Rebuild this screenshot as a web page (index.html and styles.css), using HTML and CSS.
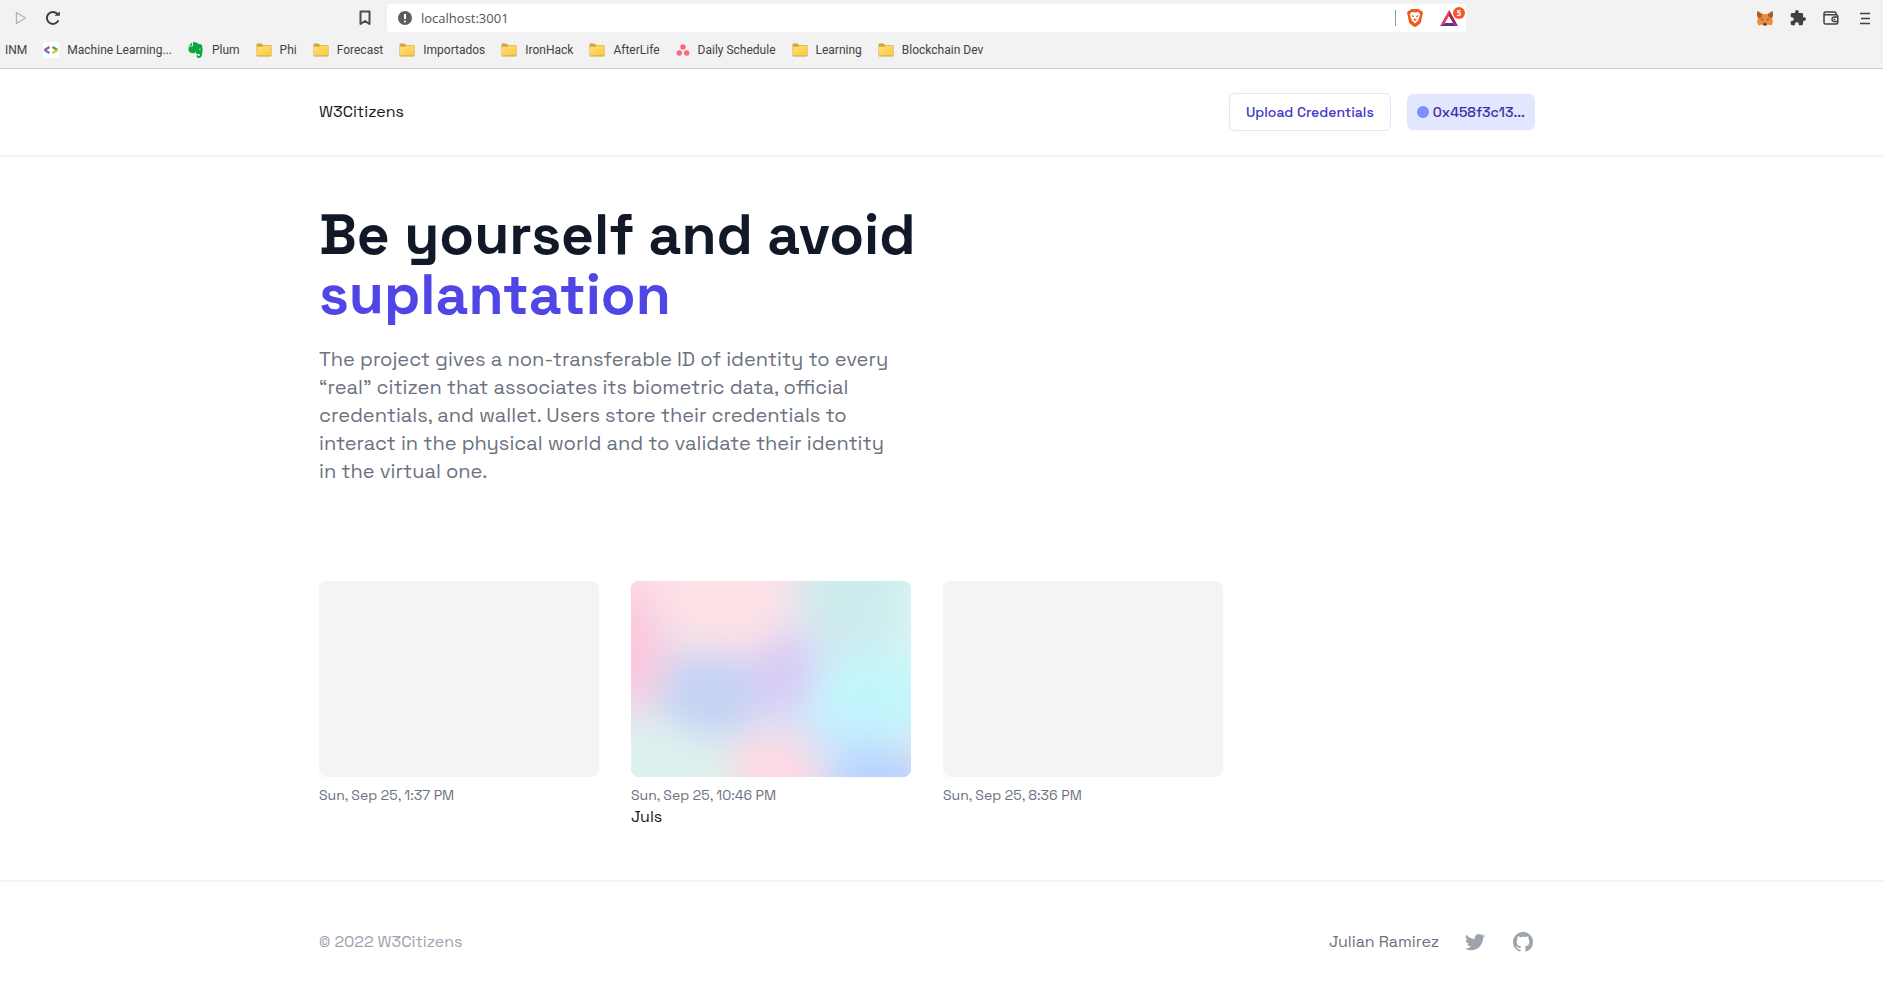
FILE: index.html
```html
<!DOCTYPE html>
<html lang="en">
<head>
<meta charset="utf-8">
<meta name="viewport" content="width=device-width, initial-scale=1">
<title>W3Citizens</title>
<link rel="stylesheet" href="styles.css">
</head>
<body>
<svg class="sprite" aria-hidden="true">
  <defs>
    <linearGradient id="folder-fill" x1="0" y1="0" x2="1" y2="1">
      <stop offset="0" stop-color="#ffe07a"/><stop offset="1" stop-color="#fbc93c"/>
    </linearGradient>
    <linearGradient id="bat-left" x1="0" y1="0" x2="0" y2="1">
      <stop offset="0" stop-color="#ff4724"/><stop offset="1" stop-color="#c6407a"/>
    </linearGradient>
    <filter id="soften" x="-50%" y="-50%" width="200%" height="200%">
      <feGaussianBlur stdDeviation="18"/>
    </filter>
  </defs>
  <symbol id="folder" viewBox="0 0 16 14">
    <path d="M0.5 1.5Q0.5 0.5 1.5 0.5H5.5L7 2H14.5Q15.5 2 15.5 3V12.5Q15.5 13.5 14.5 13.5H1.5Q0.5 13.5 0.5 12.5Z" fill="#cfa540"/>
    <path d="M1 3.800H6L7.500 2.600H15V12.400H1Z" fill="url(#folder-fill)"/>
  </symbol>
</svg>

<div class="browser">
  <div class="toolbar">
    <div class="nav">
      <button class="tool" aria-label="Forward"><svg width="12" height="14" viewBox="0 0 12 14"><path d="M1.5 1.5L10.5 7L1.5 12.5Z" fill="none" stroke="#b4b4b6" stroke-width="1.4" stroke-linejoin="round"/></svg></button>
      <button class="tool" aria-label="Reload"><svg width="16" height="16" viewBox="0 0 16 16"><path d="M13.4 10.3A6 6 0 1 1 12.3 3.8" fill="none" stroke="#3b3d40" stroke-width="2"/><path d="M9.4 5.8H14.8V1.4Z" fill="#3b3d40"/></svg></button>
    </div>
    <button class="tool" aria-label="Bookmark this page"><svg width="12" height="16" viewBox="0 0 12 16"><path d="M1.5 1.5H10.5V14L6 11L1.5 14Z" fill="none" stroke="#4a4c50" stroke-width="2" stroke-linejoin="round"/></svg></button>
    <div class="address">
      <svg width="14" height="14" viewBox="0 0 14 14"><circle cx="7" cy="7" r="7" fill="#5a5d61"/><path d="M7 3V8" stroke="#fff" stroke-width="2"/><circle cx="7" cy="10.5" r="1.1" fill="#fff"/></svg>
      <input class="url" type="text" aria-label="Address" value="localhost:3001">
      <span class="divider"></span>
      <button class="tool" aria-label="Brave Shields"><svg width="16" height="18" viewBox="0 0 16 18"><path d="M4.2 0H11.8L13.2 1.6L15.2 2L16 4.6L15.4 6L14 13C13.4 14.8 9.6 17.4 8 18C6.400 17.4 2.600 14.800 2 13L.6 6L0 4.600L.8 2L2.800 1.600Z" fill="#f05a1a"/><path d="M4.600 3L8 3.500L11.400 3L13.200 5.600L12 9L11.200 11.500L8 14.500L4.800 11.500L4 9L2.800 5.600Z" fill="#fff"/><path d="M4.400 6L7 6.900L6.900 8.200L5 7.400ZM11.600 6L9 6.900L9.100 8.200L11 7.400ZM6.200 10.500L8 9.400L9.800 10.500L8 12Z" fill="#f05a1a"/></svg></button>
      <button class="tool rewards" aria-label="Brave Rewards"><svg width="18" height="16" viewBox="0 0 18 16"><path d="M9 0L0 16L5 13L9 6Z" fill="url(#bat-left)"/><path d="M9 0L18 16L13 13L9 6Z" fill="#9e1f63"/><path d="M0 16H18L13 13H5Z" fill="#662d91"/></svg><span class="badge">5</span></button>
    </div>
    <div class="extensions">
      <button class="tool" aria-label="MetaMask"><svg width="16" height="15" viewBox="0 0 16 15"><path d="M.5 0L6 3H10L15.500 0L16 4L15 7L16 11L14.500 14.500L11 13.500L9.500 15H6.500L5 13.500L1.500 14.500L0 11L1 7L0 4Z" fill="#f08a3c"/><path d="M.5 0L5.200 3.500L4 6.500L1 7L0 4ZM15.500 0L10.800 3.500L12 6.500L15 7L16 4Z" fill="#a85a32"/><path d="M4 7.500L6.600 9L4.700 9.600ZM12 7.500L9.400 9L11.300 9.600Z" fill="#4a4a4a"/><path d="M6.500 12.200H9.500L9.800 14H6.200Z" fill="#33302f"/><path d="M5 13.500L6.200 12.500V14.600ZM11 13.500L9.800 12.500V14.600Z" fill="#d8c8bc"/></svg></button>
      <button class="tool" aria-label="Extensions"><svg width="16" height="16" viewBox="1 1 22 22"><path d="M20.500 11H19V7a2 2 0 0 0-2-2h-4V3.500a2.500 2.500 0 0 0-5 0V5H4a2 2 0 0 0-2 2v3.800h1.500a2.700 2.700 0 0 1 0 5.400H2V20a2 2 0 0 0 2 2h3.800v-1.500a2.700 2.700 0 0 1 5.400 0V22H17a2 2 0 0 0 2-2v-4h1.500a2.500 2.500 0 0 0 0-5z" fill="#3f4144"/></svg></button>
      <button class="tool" aria-label="Wallet"><svg width="16" height="14" viewBox="0 0 16 14"><path d="M13 3.500V2.500Q13 1 11.500 1H2.500Q1 1 1 2.500V11.500Q1 13 2.500 13H13Q14.800 13 14.800 11.500V5.500Q14.800 3.700 13 3.700H1.500M14.800 6H10.800A2.300 2.300 0 0 0 10.800 10.500H14.800" fill="none" stroke="#3f4144" stroke-width="1.500"/><circle cx="11.500" cy="8.300" r=".9" fill="#3f4144"/></svg></button>
      <button class="tool menu" aria-label="Menu"><svg width="10" height="13" viewBox="0 0 10 13"><path d="M0 1.500H10M1 6.500H10M0 11.500H10" stroke="#3f4144" stroke-width="1.600"/></svg></button>
    </div>
  </div>
  <nav class="bookmarks" aria-label="Bookmarks">
    <a class="bookmark" href="#">INM</a>
    <a class="bookmark" href="#"><svg width="16" height="16" viewBox="0 0 16 16"><rect width="16" height="16" rx="2" fill="#fff"/><path d="M6.500 5L1.500 8" stroke="#ea4335" stroke-width="2.200"/><path d="M1.500 8L6.500 11" stroke="#4285f4" stroke-width="2.200"/><path d="M9.500 5L14.500 8" stroke="#34a853" stroke-width="2.200"/><path d="M14.500 8L9.500 11" stroke="#fbbc05" stroke-width="2.200"/></svg>Machine Learning...</a>
    <a class="bookmark" href="#"><svg width="16" height="16" viewBox="0 0 16 16"><path d="M5 0V3.500Q5 4.500 4 4.500H.8Q0 7 1 9.500Q2 11.500 6.500 11.200Q7 9.500 7.500 9.500Q7.500 11.500 9 12H11Q12.200 12.300 12 13.300Q11.500 14.200 10 13.800V12.800Q8.500 13 8.600 14.500Q9 16 11.500 16Q13.500 15.800 14 13Q15.300 7 14 3.200Q13.500 2 10 1.800Q9 0 5 0ZM4 .4L.9 3.700H3.500Q4 3.700 4 3Z" fill="#0aa83a"/><path d="M10.600 7.200Q12.400 6.200 12.700 8Z" fill="#fff"/></svg>Plum</a>
    <a class="bookmark" href="#"><svg width="16" height="14"><use href="#folder"/></svg>Phi</a>
    <a class="bookmark" href="#"><svg width="16" height="14"><use href="#folder"/></svg>Forecast</a>
    <a class="bookmark" href="#"><svg width="16" height="14"><use href="#folder"/></svg>Importados</a>
    <a class="bookmark" href="#"><svg width="16" height="14"><use href="#folder"/></svg>IronHack</a>
    <a class="bookmark" href="#"><svg width="16" height="14"><use href="#folder"/></svg>AfterLife</a>
    <a class="bookmark" href="#"><svg width="14" height="14" viewBox="0 0 14 14"><g fill="#f8697a"><circle cx="7" cy="4" r="2.700"/><circle cx="3.300" cy="10" r="2.700"/><circle cx="10.700" cy="10" r="2.700"/></g></svg>Daily Schedule</a>
    <a class="bookmark" href="#"><svg width="16" height="14"><use href="#folder"/></svg>Learning</a>
    <a class="bookmark" href="#"><svg width="16" height="14"><use href="#folder"/></svg>Blockchain Dev</a>
  </nav>
</div>

<div class="page">
  <header class="site-header">
    <div class="container header-row">
      <a class="brand" href="#">W3Citizens</a>
      <div class="actions">
        <button class="upload">Upload Credentials</button>
        <button class="account"><span class="dot"></span>0x458f3c13...</button>
      </div>
    </div>
  </header>

  <main class="container main">
    <h1 class="title">Be yourself and avoid <span class="accent">suplantation</span></h1>
    <p class="lead">The project gives a non-transferable ID of identity to every “real” citizen that associates its biometric data, official credentials, and wallet. Users store their credentials to interact in the physical world and to validate their identity in the virtual one.</p>
    <ul class="cards">
      <li class="card"><div class="thumb"></div><p class="date">Sun, Sep 25, 1:37 PM</p></li>
      <li class="card">
        <div class="thumb">
          <svg class="mesh" viewBox="0 0 280 196" preserveAspectRatio="none" aria-hidden="true">
            <rect width="280" height="196" fill="#e2e2ee"/>
            <g filter="url(#soften)">
              <ellipse cx="190" cy="110" rx="60" ry="60" fill="#d8e2f6"/>
              <ellipse cx="20" cy="-14" rx="60" ry="36" fill="#ffdce7"/>
              <ellipse cx="-10" cy="68" rx="44" ry="60" fill="#fcc8dd"/>
              <ellipse cx="98" cy="22" rx="66" ry="60" fill="#fde2e7"/>
              <ellipse cx="232" cy="16" rx="64" ry="60" fill="#cdebec"/>
              <ellipse cx="296" cy="50" rx="30" ry="70" fill="#dcf6f5"/>
              <ellipse cx="20" cy="196" rx="84" ry="54" fill="#ddf2ee"/>
              <ellipse cx="80" cy="112" rx="50" ry="42" fill="#c3d2f4"/>
              <ellipse cx="152" cy="92" rx="32" ry="40" fill="#d8cbf6"/>
              <ellipse cx="144" cy="204" rx="44" ry="50" fill="#ffd9e2"/>
              <ellipse cx="242" cy="118" rx="62" ry="48" fill="#c2f7fc"/>
              <ellipse cx="224" cy="166" rx="38" ry="22" fill="#c3e6ff"/>
              <ellipse cx="248" cy="206" rx="50" ry="34" fill="#b8cfff"/>
            </g>
          </svg>
        </div>
        <p class="date">Sun, Sep 25, 10:46 PM</p>
        <p class="name">Juls</p>
      </li>
      <li class="card"><div class="thumb"></div><p class="date">Sun, Sep 25, 8:36 PM</p></li>
    </ul>
  </main>

  <footer class="site-footer">
    <div class="container footer-row">
      <p class="copyright">© 2022 W3Citizens</p>
      <div class="links">
        <a class="author" href="#">Julian Ramirez</a>
        <a class="social" href="#" aria-label="Twitter"><svg width="24" height="24" viewBox="0 0 24 24" fill="currentColor"><path d="M8.290 20.251c7.547 0 11.675-6.253 11.675-11.675 0-.178 0-.355-.012-.530A8.348 8.348 0 0022 5.920a8.190 8.190 0 01-2.357.646 4.118 4.118 0 001.804-2.270 8.224 8.224 0 01-2.605.996 4.107 4.107 0 00-6.993 3.743 11.650 11.650 0 01-8.457-4.287 4.106 4.106 0 001.270 5.477A4.072 4.072 0 012.800 9.713v.052a4.105 4.105 0 003.292 4.022 4.095 4.095 0 01-1.853.070 4.108 4.108 0 003.834 2.850A8.233 8.233 0 012 18.407a11.616 11.616 0 006.290 1.840"/></svg></a>
        <a class="social" href="#" aria-label="GitHub"><svg width="24" height="24" viewBox="0 0 24 24" fill="currentColor"><path fill-rule="evenodd" clip-rule="evenodd" d="M12 2C6.477 2 2 6.484 2 12.017c0 4.425 2.865 8.180 6.839 9.504.5.092.682-.217.682-.483 0-.237-.008-.868-.013-1.703-2.782.605-3.369-1.343-3.369-1.343-.454-1.158-1.110-1.466-1.110-1.466-.908-.620.069-.608.069-.608 1.003.070 1.531 1.032 1.531 1.032.892 1.530 2.341 1.088 2.910.832.092-.647.350-1.088.636-1.338-2.220-.253-4.555-1.113-4.555-4.951 0-1.093.390-1.988 1.029-2.688-.103-.253-.446-1.272.098-2.650 0 0 .840-.270 2.750 1.026A9.564 9.564 0 0112 6.844c.850.004 1.705.115 2.504.337 1.909-1.296 2.747-1.027 2.747-1.027.546 1.379.202 2.398.100 2.651.640.700 1.028 1.595 1.028 2.688 0 3.848-2.339 4.695-4.566 4.943.359.309.678.920.678 1.855 0 1.338-.012 2.419-.012 2.747 0 .268.180.580.688.482A10.019 10.019 0 0022 12.017C22 6.484 17.522 2 12 2z"/></svg></a>
      </div>
    </div>
  </footer>
</div>
</body>
</html>
```

FILE: styles.css
```css
* { box-sizing: border-box; }

body {
  margin: 0;
  background: #fff;
  font-family: "Space Grotesk", Inter, "Open Sans", sans-serif;
  color: #111827;
}

h1, p, ul { margin: 0; padding: 0; }
a { color: inherit; text-decoration: none; }
button { border: 0; padding: 0; background: none; font: inherit; cursor: pointer; }
svg { display: block; flex: none; }
.sprite { position: absolute; width: 0; height: 0; }

/* Browser chrome */
.browser {
  background: #f2f2f2;
  border-bottom: 1px solid #cfcfd1;
  font-family: "Segoe UI", "Open Sans", sans-serif;
}

.toolbar {
  display: flex;
  align-items: center;
  height: 36px;
  padding: 0 13px 0 15px;
}

.tool { flex: none; }
.nav { display: flex; align-items: center; gap: 18px; width: 344px; }

.address {
  display: flex;
  align-items: center;
  flex: 0 1 1079px;
  height: 28px;
  margin-left: 16px;
  padding: 0 8px 0 11px;
  background: #fff;
  border-radius: 3px;
}

.url {
  flex: 1;
  min-width: 0;
  margin-left: 9px;
  padding: 0;
  border: 0;
  outline: 0;
  background: none;
  font: 13px "Segoe UI", "Open Sans", sans-serif;
  color: #505357;
}

.divider { width: 1px; height: 16px; margin-right: 11px; background: #9a9a9c; }
.rewards { position: relative; margin-left: 17px; }

.badge {
  position: absolute;
  top: -3px;
  right: -7px;
  width: 12px;
  height: 12px;
  border-radius: 50%;
  background: #fb542b;
  color: #fff;
  font-size: 8px;
  font-weight: 700;
  line-height: 12px;
  text-align: center;
}

.extensions { display: flex; align-items: center; gap: 17px; margin-left: auto; }
.menu { margin-left: 4px; }

.bookmarks {
  display: flex;
  align-items: center;
  gap: 16px;
  height: 32px;
  padding: 0 5px 4px;
  font-family: "Segoe UI", Roboto, sans-serif;
  font-size: 12px;
  line-height: 16px;
  color: #3f4246;
  white-space: nowrap;
}

.bookmark { display: flex; align-items: center; gap: 8px; }

/* Site */
.page { padding-right: 29px; }

.container {
  width: 100%;
  max-width: 1280px;
  margin: 0 auto;
  padding: 0 32px;
}

.site-header, .site-footer { margin-right: -29px; padding-right: 29px; }
.site-header { border-bottom: 2px solid #f3f4f6; }

.header-row {
  display: flex;
  align-items: center;
  justify-content: space-between;
  padding-top: 24px;
  padding-bottom: 24px;
}

.brand { font-size: 16px; line-height: 24px; }
.actions { display: flex; align-items: center; gap: 16px; }

.upload {
  height: 38px;
  padding: 0 16px;
  border: 1px solid #e0e7ff;
  border-radius: 6px;
  font-size: 14px;
  font-weight: 500;
  color: #4338ca;
}

.account {
  display: flex;
  align-items: center;
  gap: 4px;
  height: 36px;
  padding: 0 10px;
  border-radius: 6px;
  background: #e0e7ff;
  font-size: 14px;
  font-weight: 500;
  color: #3730a3;
}

.dot { width: 12px; height: 12px; border-radius: 50%; background: #818cf8; }

.main { padding-top: 48px; padding-bottom: 51px; }

.title {
  max-width: 672px;
  font-size: 57px;
  font-weight: 700;
  line-height: 60px;
}

.accent { display: block; color: #4f46e5; }

.lead {
  max-width: 576px;
  margin-top: 20px;
  font-size: 20px;
  line-height: 28px;
  color: #6b7280;
}

.cards {
  display: grid;
  grid-template-columns: repeat(4, 1fr);
  gap: 32px;
  margin-top: 96px;
  list-style: none;
}

.thumb {
  aspect-ratio: 10 / 7;
  border-radius: 8px;
  background: #f3f4f6;
  overflow: hidden;
}

.mesh { width: 100%; height: 100%; }

.date { margin-top: 8px; font-size: 14px; line-height: 20px; color: #6b7280; }
.name { font-size: 16px; line-height: 24px; }

.site-footer { border-top: 2px solid #f3f4f6; }

.footer-row {
  display: flex;
  align-items: center;
  justify-content: space-between;
  padding-top: 48px;
  padding-bottom: 43px;
  font-size: 16px;
  line-height: 24px;
}

.copyright { color: #9ca3af; }
.links { display: flex; align-items: center; gap: 24px; }
.author { color: #6b7280; }
.social { color: #9ca3af; }
```
